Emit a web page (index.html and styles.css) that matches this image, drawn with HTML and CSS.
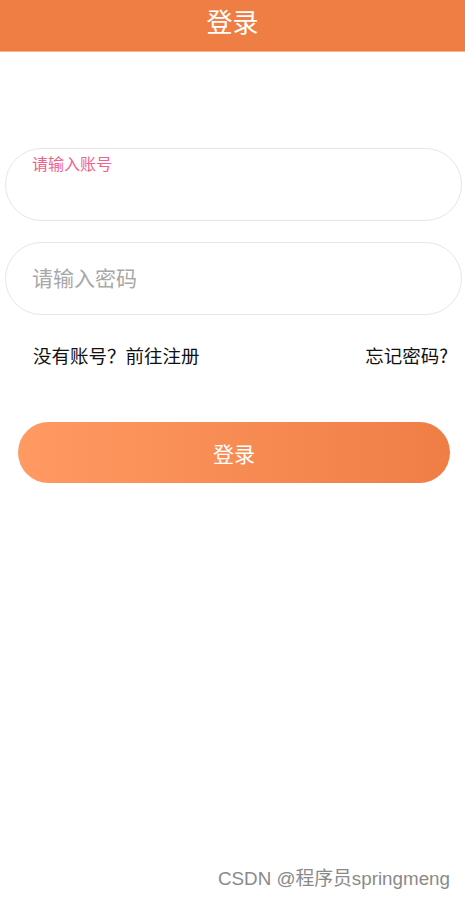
FILE: index.html
```html
<!DOCTYPE html>
<html lang="zh-CN">
<head>
    <meta charset="UTF-8">
    <meta name="viewport" content="width=device-width, initial-scale=1.0">
    <title>登录</title>
    <link rel="stylesheet" href="styles.css">
</head>
<body>
    <div class="page">
        <div class="nav-bar">登录</div>

        <div class="form">
            <div class="field">
                <span class="field-label">请输入账号</span>
                <input type="text" class="field-input" id="account">
            </div>
            <div class="field">
                <input type="password" class="field-input" id="password" placeholder="请输入密码">
            </div>

            <div class="links">
                <span class="link">没有账号？前往注册</span>
                <span class="link">忘记密码?</span>
            </div>

            <button class="login-btn">登录</button>
        </div>

        <div class="watermark">CSDN @程序员springmeng</div>
    </div>
</body>
</html>
```

FILE: styles.css
```css
:root {
    --orange: #ef7e45;
    --orange-light: #ff9a62;
    --border-color: #e6e6e6;
    --font-family: "Noto Sans CJK SC", "Noto Sans", sans-serif;
}

body {
    margin: 0;
    font-family: var(--font-family);
    background: #ffffff;
}

.page {
    height: 898px;
    display: flex;
    flex-direction: column;
}

.nav-bar {
    height: 52px;
    line-height: 42px;
    background: var(--orange);
    border-bottom: 1px solid #f5b58f;
    box-sizing: border-box;
    color: #ffffff;
    font-size: 26px;
    text-align: center;
}

.form {
    padding: 96px 3px 0 5px;
    display: flex;
    flex-direction: column;
}

.field {
    position: relative;
    height: 73px;
    margin-bottom: 21px;
    border: 1.5px solid var(--border-color);
    border-radius: 37px;
    box-sizing: border-box;
}

.field-label {
    position: absolute;
    left: 26px;
    top: 2px;
    color: #f0628a;
    font-size: 16px;
}

.field-input {
    width: 100%;
    height: 100%;
    box-sizing: border-box;
    padding: 0 26px 3px;
    border: none;
    outline: none;
    background: transparent;
    font-family: var(--font-family);
    font-size: 21px;
    color: #333333;
    border-radius: 37px;
}

.field-input::placeholder {
    color: #a8a8a8;
}

.links {
    display: flex;
    justify-content: space-between;
    padding: 6px 14px 0 28px;
    color: #111111;
    font-size: 18.5px;
}

.login-btn {
    margin: 54px 12px 0 13px;
    height: 61px;
    border: none;
    border-radius: 31px;
    background: linear-gradient(to right, var(--orange-light), var(--orange));
    color: #ffffff;
    font-family: var(--font-family);
    font-size: 21px;
    cursor: pointer;
}

.watermark {
    margin-top: auto;
    padding: 0 15px 8px 0;
    text-align: right;
    color: #8a8a8a;
    font-size: 18.8px;
    font-family: "Liberation Sans", "Noto Sans CJK SC", sans-serif;
}
```
